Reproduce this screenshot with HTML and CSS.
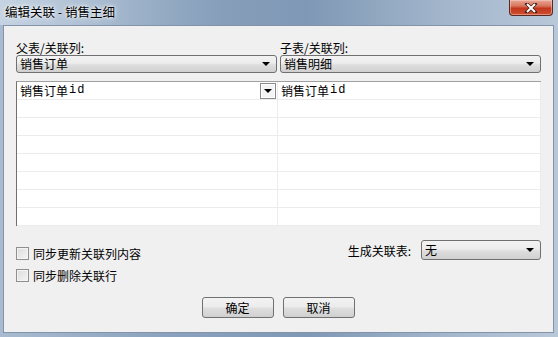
FILE: index.html
```html
<!DOCTYPE html>
<html lang="zh">
<head>
    <meta charset="UTF-8">
    <title>编辑关联 - 销售主细</title>
    <link rel="stylesheet" href="styles.css">
</head>
<body>
    <div class="window">
        <div class="titlebar">
            <span class="title">编辑关联 - 销售主细</span>
            <div class="close-btn">
                <svg width="14" height="10" viewBox="0 0 14 10">
                    <path d="M3 1 L11 9 M11 1 L3 9" stroke="#3a1a14" stroke-width="3.4" stroke-linecap="square"/>
                    <path d="M3 1 L11 9 M11 1 L3 9" stroke="#ffffff" stroke-width="2"/>
                </svg>
            </div>
        </div>

        <div class="client">
            <!-- table pickers -->
            <div class="pair labels">
                <div>父表/关联列:</div>
                <div>子表/关联列:</div>
            </div>
            <div class="pair combos">
                <div class="combo"><span>销售订单</span><i class="arrow"></i></div>
                <div class="combo"><span>销售明细</span><i class="arrow"></i></div>
            </div>

            <!-- column mapping grid -->
            <div class="grid">
                <div class="row">
                    <div class="cell">销售订单<span class="mono">id</span><span class="cell-drop"><i class="arrow"></i></span></div>
                    <div class="cell">销售订单<span class="mono">id</span></div>
                </div>
                <div class="row"><div class="cell"></div><div class="cell"></div></div>
                <div class="row"><div class="cell"></div><div class="cell"></div></div>
                <div class="row"><div class="cell"></div><div class="cell"></div></div>
                <div class="row"><div class="cell"></div><div class="cell"></div></div>
                <div class="row"><div class="cell"></div><div class="cell"></div></div>
                <div class="row"><div class="cell"></div><div class="cell"></div></div>
                <div class="row"><div class="cell"></div><div class="cell"></div></div>
            </div>

            <div class="options">
                <div class="checks">
                    <label class="check"><span class="box"></span>同步更新关联列内容</label>
                    <label class="check"><span class="box"></span>同步删除关联行</label>
                </div>
                <div class="gen">
                    <span>生成关联表:</span>
                    <div class="combo small"><span>无</span><i class="arrow"></i></div>
                </div>
            </div>

            <div class="buttons">
                <div class="btn">确定</div>
                <div class="btn">取消</div>
            </div>
        </div>
    </div>
</body>
</html>
```

FILE: styles.css
```css
body {
    margin: 0;
    font-family: "Noto Sans CJK SC", "Liberation Sans", sans-serif;
    font-size: 12px;
    color: #000000;
}
.window {
    width: 558px;
    height: 337px;
    background: linear-gradient(90deg, #a8bbd0 0%, #8aa2bd 30%, #7f98b5 55%, #a3b6cc 80%, #b9c8d9 100%);
    display: flex;
    flex-direction: column;
}
.titlebar {
    height: 25px;
    display: flex;
    align-items: flex-start;
    justify-content: space-between;
    background: linear-gradient(90deg, rgba(220, 230, 240, 0.55) 0%, rgba(220, 230, 240, 0.2) 22%, rgba(0, 0, 0, 0) 40%);
}
.title {
    margin: 4px 0 0 5px;
    line-height: 16px;
    font-size: 12.5px;
    text-shadow: 0 0 6px #ffffff, 0 0 3px #ffffff;
}
.close-btn {
    width: 44px;
    height: 16px;
    margin-right: 5px;
    border: 1px solid #5a2a22;
    border-top: none;
    border-radius: 0 0 4px 4px;
    background: linear-gradient(#e7a897 0%, #d9755d 40%, #c2371c 55%, #cf5032 100%);
    box-shadow: inset 0 0 0 1px rgba(255, 220, 210, 0.45);
    display: flex;
    align-items: center;
    justify-content: center;
    box-sizing: border-box;
}
.client {
    flex: 1;
    margin: 0 4px 4px 3px;
    background: #f0f0f0;
    border: 1px solid #8394aa;
    padding: 0 0 0 12px;
    box-sizing: border-box;
}
.pair {
    display: grid;
    grid-template-columns: 262px 263px;
}
.labels {
    margin-top: 14px;
    height: 15px;
    line-height: 15px;
}
.labels div:last-child {
    padding-left: 2px;
}
.combos {
    height: 18px;
}
.combos .combo:first-child {
    margin-right: 1px;
}
.combos .combo:last-child {
    margin-left: 2px;
}
.combo {
    height: 18px;
    border: 1px solid #707070;
    border-radius: 3px;
    background: linear-gradient(#f3f3f3 0%, #ececec 45%, #dedede 55%, #d0d0d0 100%);
    box-sizing: border-box;
    display: flex;
    align-items: center;
    justify-content: space-between;
    padding: 0 6px 0 3px;
    line-height: 16px;
}
.arrow {
    width: 0;
    height: 0;
    border-left: 4px solid transparent;
    border-right: 4px solid transparent;
    border-top: 4px solid #000000;
}
.grid {
    margin-top: 8px;
    width: 525px;
    border-top: 1px solid #a0a0a0;
    border-left: 1px solid #707070;
    background: #ffffff;
    box-sizing: border-box;
}
.row {
    display: grid;
    grid-template-columns: 261px 263px;
    height: 18px;
}
.cell {
    border-bottom: 1px solid #ececec;
    border-right: 1px solid #ececec;
    padding-left: 3px;
    line-height: 17px;
    display: flex;
    align-items: center;
    position: relative;
}
.mono {
    font-family: "Liberation Mono", monospace;
    font-size: 12px;
    letter-spacing: 1px;
    padding-left: 1px;
}
.cell-drop {
    position: absolute;
    right: 1px;
    top: 1px;
    width: 16px;
    height: 16px;
    border: 1px solid #8a8a8a;
    box-sizing: border-box;
    background: #f4f4f4;
    box-shadow: inset 0 0 0 1px #ffffff;
    display: flex;
    align-items: center;
    justify-content: center;
}
.options {
    display: flex;
    justify-content: space-between;
    width: 525px;
    margin-top: 14px;
}
.checks {
    display: flex;
    flex-direction: column;
    gap: 8px;
    padding-top: 6px;
}
.check {
    display: flex;
    align-items: center;
    gap: 4px;
    height: 14px;
}
.box {
    width: 13px;
    height: 13px;
    border: 1px solid #8e8f8f;
    box-sizing: border-box;
    background: linear-gradient(135deg, #dcdcdc 0%, #f4f4f4 100%);
    box-shadow: inset 0 0 0 1px #f4f4f4;
}
.gen {
    display: flex;
    align-items: center;
    gap: 10px;
    height: 20px;
}
.combo.small {
    width: 120px;
    height: 20px;
}
.buttons {
    display: flex;
    justify-content: center;
    gap: 9px;
    width: 525px;
    margin-top: 15px;
    padding-right: 1px;
    box-sizing: border-box;
}
.btn {
    width: 72px;
    height: 21px;
    border: 1px solid #707070;
    border-radius: 3px;
    background: linear-gradient(#f3f3f3 0%, #ececec 45%, #dedede 55%, #d0d0d0 100%);
    box-sizing: border-box;
    text-align: center;
    line-height: 19px;
}
```
